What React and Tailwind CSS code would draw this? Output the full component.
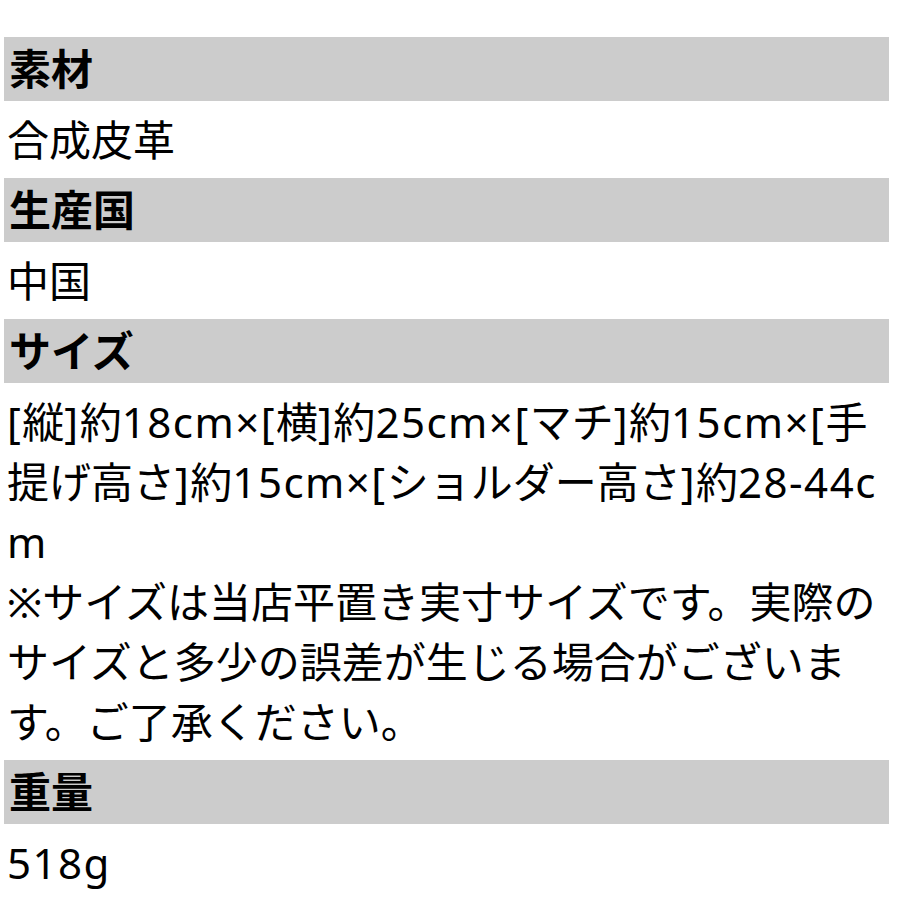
const font = { fontFamily: '"Noto Sans", "Noto Sans CJK JP", sans-serif' };

// latin runs sit a little looser than the CJK text around them
const Mixed = ({ text }) =>
  text.split(/([\x20-\x7E×]+)/).map((part, i) =>
    /^[\x20-\x7E×]+$/.test(part) ? (
      <span key={i} className="tracking-[1.5px]">
        {part}
      </span>
    ) : (
      part
    )
  );

const Head = ({ children }) => (
  <div className="ml-[4px] w-[885px] h-[64px] bg-[#cccccc] pl-[5px] text-[42px] leading-[64px] font-bold text-black">
    {children}
  </div>
);

const Body = ({ children }) => (
  <div className="pl-[7px] pr-[6px] py-[8.5px] text-[42px] leading-[60px] text-black break-all">
    {children}
  </div>
);

export default function App() {
  return (
    <div
      className="w-[900px] h-[900px] bg-white pt-[37px] overflow-hidden"
      style={font}
    >
      <Head>素材</Head>
      <Body>合成皮革</Body>
      <Head>生産国</Head>
      <Body>中国</Body>
      <Head>サイズ</Head>
      <Body>
        <Mixed text="[縦]約18cm×[横]約25cm×[マチ]約15cm×[手提げ高さ]約15cm×[ショルダー高さ]約28-44cm" />
        <br />
        ※サイズは当店平置き実寸サイズです。実際のサイズと多少の誤差が生じる場合がございます。ご了承ください。
      </Body>
      <Head>重量</Head>
      <Body>
        <Mixed text="518g" />
      </Body>
    </div>
  );
}
